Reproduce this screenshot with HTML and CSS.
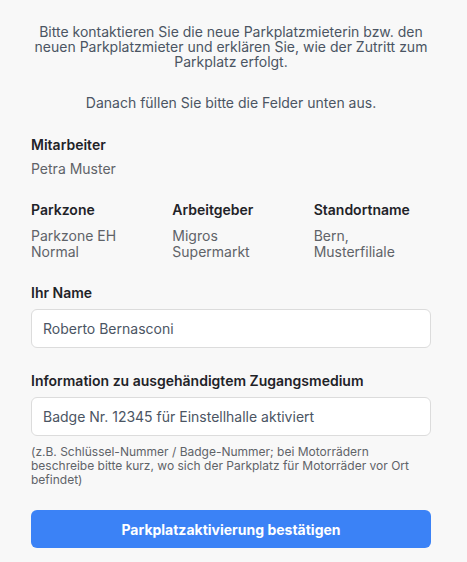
FILE: index.html
```html
<!DOCTYPE html>
<html lang="de">
<head>
<meta charset="utf-8">
<link rel="stylesheet" href="styles.css">
</head>
<body>
<main class="page">
  <div class="intro">
    <p>Bitte kontaktieren Sie die neue Parkplatzmieterin bzw. den neuen Parkplatzmieter und erklären Sie, wie der Zutritt zum Parkplatz erfolgt.</p>
    <p class="intro-second">Danach füllen Sie bitte die Felder unten aus.</p>
  </div>

  <div class="field">
    <div class="label">Mitarbeiter</div>
    <div class="value">Petra Muster</div>
  </div>

  <div class="grid3">
    <div class="field">
      <div class="label">Parkzone</div>
      <div class="value">Parkzone EH<br>Normal</div>
    </div>
    <div class="field">
      <div class="label">Arbeitgeber</div>
      <div class="value">Migros<br>Supermarkt</div>
    </div>
    <div class="field">
      <div class="label">Standortname</div>
      <div class="value">Bern,<br>Musterfiliale</div>
    </div>
  </div>

  <div class="form-field">
    <label class="label" for="name">Ihr Name</label>
    <input id="name" class="input" type="text" value="Roberto Bernasconi">
  </div>

  <div class="form-field">
    <label class="label" for="medium">Information zu ausgehändigtem Zugangsmedium</label>
    <input id="medium" class="input" type="text" value="Badge Nr. 12345 für Einstellhalle aktiviert">
    <p class="hint">(z.B. Schlüssel-Nummer / Badge-Nummer; bei Motorrädern beschreibe bitte kurz, wo sich der Parkplatz für Motorräder vor Ort befindet)</p>
  </div>

  <button class="btn" type="button">Parkplatzaktivierung bestätigen</button>
</main>
</body>
</html>
```
FILE: styles.css
```css
html, body {
  margin: 0;
  padding: 0;
  background: #f8f8f8;
}
body {
  font-family: Inter, "Open Sans", sans-serif;
  color: #4b5563;
}
.page {
  width: 400px;
  margin: 0 0 0 31px;
  padding: 24px 0 0 0;
  display: flex;
  flex-direction: column;
}
.intro {
  text-align: center;
  font-size: 14px;
  line-height: 15px;
  color: #4b5563;
}
.intro p {
  margin: 0;
}
.intro .intro-second {
  margin-top: 26px;
}
.field {
  display: flex;
  flex-direction: column;
}
.page > .field {
  margin-top: 26px;
}
.label {
  font-size: 14px;
  font-weight: 600;
  color: #1f2328;
  line-height: 18px;
}
.value {
  margin-top: 7px;
  font-size: 14px;
  line-height: 16px;
  color: #5f6368;
}
.grid3 .value {
  margin-top: 9px;
}
.grid3 {
  margin-top: 24px;
  display: grid;
  grid-template-columns: repeat(3, 1fr);
  column-gap: 24px;
}
.form-field {
  margin-top: 24px;
  display: flex;
  flex-direction: column;
}
.input {
  margin-top: 7px;
  height: 39px;
  box-sizing: border-box;
  border: 1px solid #dcdcdc;
  border-radius: 6px;
  background: #fff;
  padding: 0 11px;
  font-family: inherit;
  font-size: 14px;
  color: #4b5563;
  outline: none;
}
.hint {
  margin: 9px 0 0 0;
  font-size: 12px;
  line-height: 14px;
  color: #5f6368;
}
.btn {
  margin-top: 23px;
  height: 38px;
  border: none;
  border-radius: 6px;
  background: #3b82f6;
  color: #fff;
  font-family: inherit;
  font-size: 14px;
  font-weight: 700;
  cursor: pointer;
}
```
